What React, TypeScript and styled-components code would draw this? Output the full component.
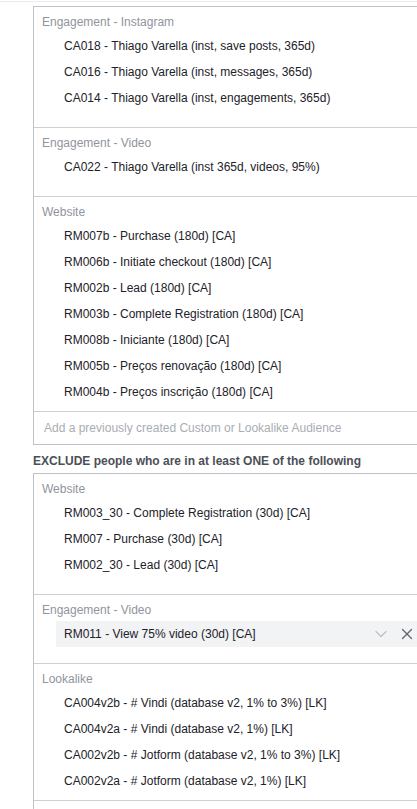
import { FC } from 'react';
import styled, { createGlobalStyle } from 'styled-components';
import { ChevronDown, X } from 'lucide-react';

const COLOR = {
  TEXT: '#1d2129',
  HEADER: '#90949c',
  LABEL: '#4b4f56',
  PLACEHOLDER: '#a9adb3',
  BOX_BORDER: '#bec3c9',
  DIVIDER: '#ccd0d5',
  HOVER: '#f2f3f5',
  TOP_RULE: '#e9ebee',
};

interface Group {
  title: string;
  items: string[];
  active?: string;
}

const includeGroups: Group[] = [
  {
    title: 'Engagement - Instagram',
    items: [
      'CA018 - Thiago Varella (inst, save posts, 365d)',
      'CA016 - Thiago Varella (inst, messages, 365d)',
      'CA014 - Thiago Varella (inst, engagements, 365d)',
    ],
  },
  {
    title: 'Engagement - Video',
    items: ['CA022 - Thiago Varella (inst 365d, videos, 95%)'],
  },
  {
    title: 'Website',
    items: [
      'RM007b - Purchase (180d) [CA]',
      'RM006b - Initiate checkout (180d) [CA]',
      'RM002b - Lead (180d) [CA]',
      'RM003b - Complete Registration (180d) [CA]',
      'RM008b - Iniciante (180d) [CA]',
      'RM005b - Preços renovação (180d) [CA]',
      'RM004b - Preços inscrição (180d) [CA]',
    ],
  },
];

const excludeGroups: Group[] = [
  {
    title: 'Website',
    items: [
      'RM003_30 - Complete Registration (30d) [CA]',
      'RM007 - Purchase (30d) [CA]',
      'RM002_30 - Lead (30d) [CA]',
    ],
  },
  {
    title: 'Engagement - Video',
    items: ['RM011 - View 75% video (30d) [CA]'],
    active: 'RM011 - View 75% video (30d) [CA]',
  },
  {
    title: 'Lookalike',
    items: [
      'CA004v2b - # Vindi (database v2, 1% to 3%) [LK]',
      'CA004v2a - # Vindi (database v2, 1%) [LK]',
      'CA002v2b - # Jotform (database v2, 1% to 3%) [LK]',
      'CA002v2a - # Jotform (database v2, 1%) [LK]',
    ],
  },
];

const AudienceBox: FC<{ groups: Group[] }> = ({ groups }) => (
  <Box>
    <List>
      {groups.map((group) => (
        <Section key={group.title}>
          <SectionHeader>{group.title}</SectionHeader>
          {group.items.map((item) => {
            const active = item === group.active;
            return (
              <Item key={item} $active={active}>
                <ItemText>{item}</ItemText>
                {active && (
                  <ItemActions>
                    <ChevronDown size={20} strokeWidth={1.6} color={COLOR.BOX_BORDER} />
                    <X size={18} strokeWidth={1.8} color="#606770" />
                  </ItemActions>
                )}
              </Item>
            );
          })}
        </Section>
      ))}
    </List>
    <AddRow>Add a previously created Custom or Lookalike Audience</AddRow>
  </Box>
);

const App: FC = () => (
  <>
    <GlobalStyle />
    <Page>
      <TopRule />
      <AudienceBox groups={includeGroups} />
      <Label>EXCLUDE people who are in at least ONE of the following</Label>
      <AudienceBox groups={excludeGroups} />
    </Page>
  </>
);

const GlobalStyle = createGlobalStyle`
  html, body {
    margin: 0;
    padding: 0;
    background: #fff;
    overflow: hidden;
  }
  body {
    font-family: "Liberation Sans", Arial, Helvetica, sans-serif;
    font-size: 12px;
    color: ${COLOR.TEXT};
  }
`;

const Page = styled.div`
  width: 417px;
  padding-top: 1px;
`;

const TopRule = styled.div`
  height: 1px;
  background: ${COLOR.TOP_RULE};
  margin-bottom: 4px;
`;

const Box = styled.div`
  margin-left: 33px;
  border: 1px solid ${COLOR.BOX_BORDER};
  border-right: none;
  background: #fff;
`;

const List = styled.div`
  display: flex;
  flex-direction: column;
`;

const Section = styled.div`
  padding-bottom: 16px;
  & + & {
    border-top: 1px solid ${COLOR.DIVIDER};
  }
  &:last-child {
    padding-bottom: 6px;
  }
`;

const SectionHeader = styled.div`
  padding: 7px 8px 3px;
  line-height: 16px;
  color: ${COLOR.HEADER};
`;

const Item = styled.div<{ $active?: boolean }>`
  display: flex;
  align-items: center;
  height: 26px;
  margin-left: 22px;
  padding: 0 1px 0 8px;
  background: ${({ $active }) => ($active ? COLOR.HOVER : 'transparent')};
`;

const ItemText = styled.span`
  flex: 1;
  line-height: 16px;
  white-space: nowrap;
  color: ${COLOR.TEXT};
`;

const ItemActions = styled.div`
  display: flex;
  align-items: center;
  gap: 7px;
`;

const AddRow = styled.div`
  border-top: 1px solid ${COLOR.DIVIDER};
  height: 32px;
  display: flex;
  align-items: center;
  padding-left: 10px;
  color: ${COLOR.PLACEHOLDER};
`;

const Label = styled.div`
  margin: 8px 0 4px 33px;
  line-height: 16px;
  font-weight: bold;
  color: ${COLOR.LABEL};
`;

export default App;
